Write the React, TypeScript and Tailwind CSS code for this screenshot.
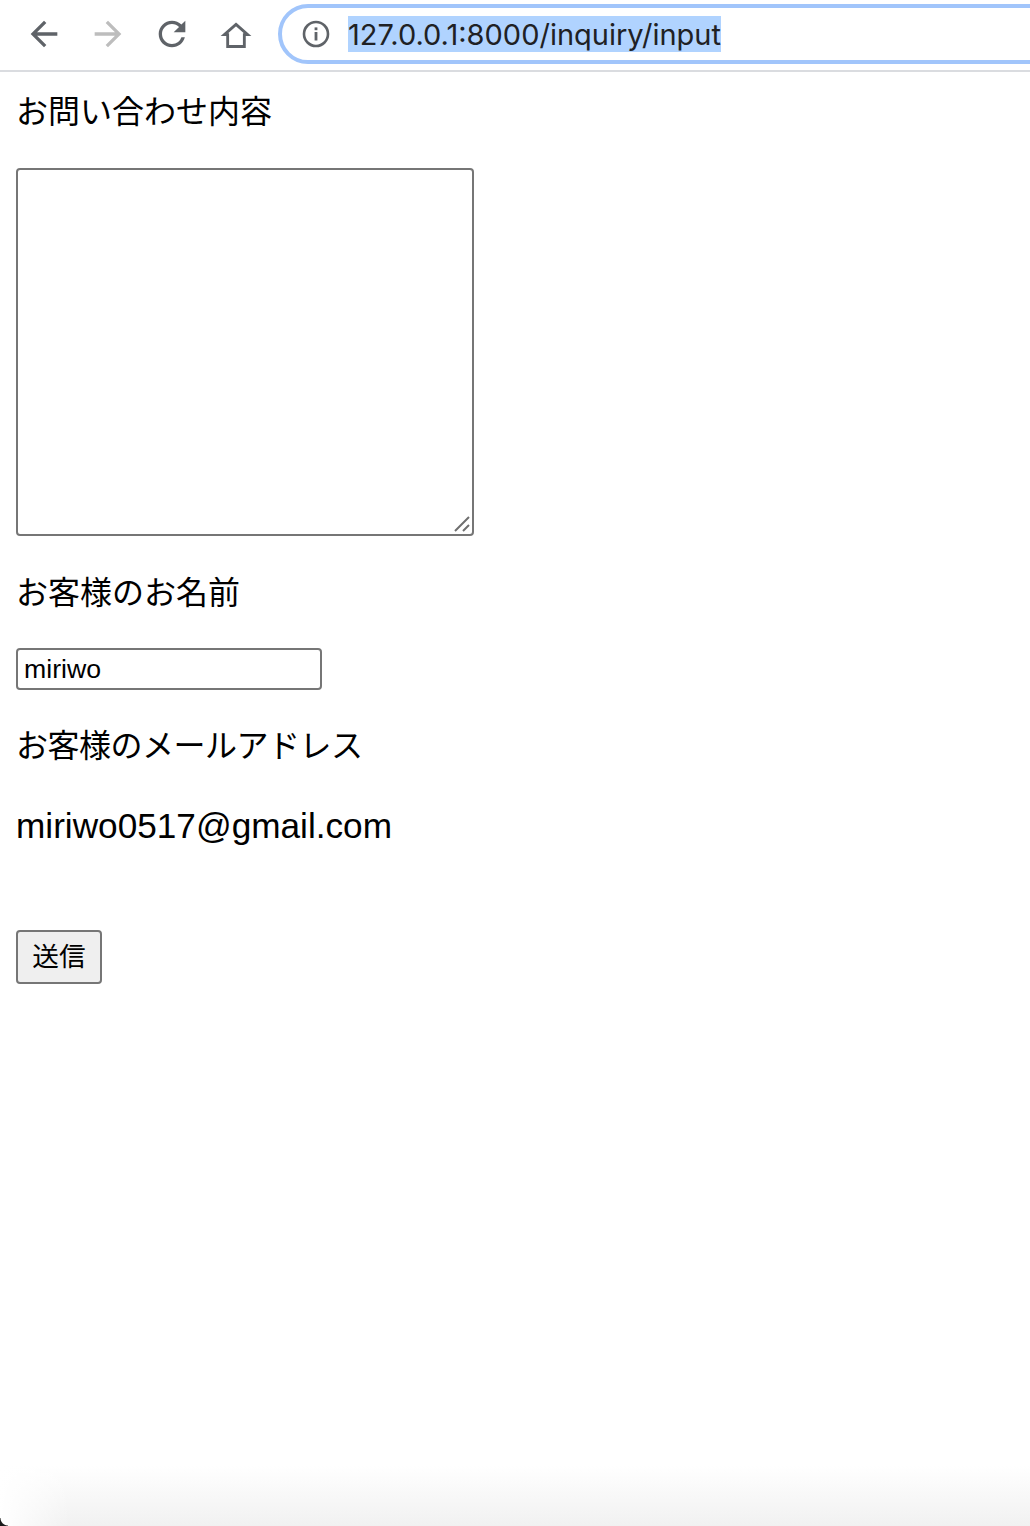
function BackIcon({ className }: { className: string }) {
  return (
    <svg viewBox="0 0 24 24" className={className} fill="currentColor">
      <path d="M20 11H7.83l5.59-5.59L12 4l-8 8 8 8 1.41-1.41L7.83 13H20v-2z" />
    </svg>
  )
}

function Toolbar() {
  return (
    <div className="flex items-center h-[72px] pl-[24px] pb-[4px] pt-[2px] border-b-2 border-[#dadce0] overflow-hidden text-[#5f6368]">
      <BackIcon className="shrink-0 w-[40px] h-[40px]" />
      <BackIcon className="shrink-0 w-[40px] h-[40px] ml-[24px] rotate-180 text-[#bdbdbd]" />
      <svg viewBox="0 0 24 24" className="shrink-0 w-[40px] h-[40px] ml-[24px]" fill="currentColor">
        <path d="M17.65 6.35A7.958 7.958 0 0012 4c-4.42 0-7.99 3.58-7.99 8s3.57 8 7.99 8c3.73 0 6.84-2.55 7.73-6h-2.08A5.99 5.99 0 0112 18c-3.31 0-6-2.69-6-6s2.69-6 6-6c1.66 0 3.14.69 4.22 1.78L13 11h7V4l-2.35 2.35z" />
      </svg>
      <svg viewBox="0 0 24 24" className="shrink-0 w-[40px] h-[40px] ml-[24px]" fill="none" stroke="currentColor" strokeWidth="1.7">
        <path d="M12 6.2 L19 12.4 H17 V19.5 H7 V12.4 H5 Z" strokeLinejoin="miter" />
      </svg>
      <div className="flex items-center shrink-0 w-[800px] h-[60px] ml-[22px] pl-[20px] border-4 border-[#a1c5fb] rounded-l-[30px] bg-white">
        <svg viewBox="0 0 28 28" className="shrink-0 w-[28px] h-[28px]" fill="none">
          <circle cx="14" cy="14" r="12" stroke="currentColor" strokeWidth="2.6" />
          <rect x="12.6" y="12" width="2.8" height="8.5" fill="currentColor" />
          <rect x="12.6" y="7.4" width="2.8" height="2.8" fill="currentColor" />
        </svg>
        <span className="ml-[18px] h-[36px] leading-[37px] bg-[#b0d3ff] text-[#202124] text-[29px] whitespace-nowrap font-['Inter',sans-serif]">
          127.0.0.1:8000/inquiry/input
        </span>
      </div>
    </div>
  )
}

function Form() {
  const label = "text-[32px] leading-[40px] text-black"
  return (
    <div className="px-[16px] font-['Noto_Sans_CJK_JP','Noto_Sans',sans-serif]">
      <p className={`${label} mt-[17px]`}>お問い合わせ内容</p>
      <div className="relative w-[458px] h-[368px] mt-[39px]">
        <textarea className="block w-full h-full resize-none bg-white border-2 border-[#767676] rounded-[4px]" />
        <svg viewBox="0 0 20 20" className="absolute right-[2px] bottom-[2px] w-[20px] h-[20px]" stroke="#6f6f6f" strokeWidth="2">
          <path d="M3 17 L17 3 M11 17 L17 11" />
        </svg>
      </div>
      <p className={`${label} mt-[34px]`}>お客様のお名前</p>
      <input
        type="text"
        defaultValue="miriwo"
        className="block w-[306px] h-[42px] mt-[38px] px-[6px] bg-white border-2 border-[#767676] rounded-[4px] text-[26.67px] text-black font-['Liberation_Sans',sans-serif]"
      />
      <p className={`${label} mt-[33px] tracking-[-0.5px]`}>お客様のメールアドレス</p>
      <p className="text-[35.2px] leading-[40px] mt-[43px] text-black font-['Liberation_Sans',sans-serif]">miriwo0517@gmail.com</p>
      <button className="block w-[86px] h-[54px] mt-[84px] bg-[#efefef] border-2 border-[#767676] rounded-[4px] text-[26.67px] text-black leading-[32px] pb-[4px]">
        送信
      </button>
    </div>
  )
}

export default function App() {
  return (
    <div className="relative w-[1030px] h-[1526px] overflow-hidden bg-white">
      <Toolbar />
      <Form />
      {/* window shadow along the bottom edge */}
      <div className="absolute left-0 right-0 bottom-0 h-[60px] bg-gradient-to-b from-white/0 to-[#f1f1f1]" />
      <div className="absolute left-0 bottom-0 w-[70px] h-[70px] bg-gradient-to-r from-white to-white/0" />
      <div className="absolute left-0 bottom-0 w-[8px] h-[8px] bg-[radial-gradient(circle_at_100%_0,transparent_7px,#1a1a1a_8px)]" />
    </div>
  )
}
